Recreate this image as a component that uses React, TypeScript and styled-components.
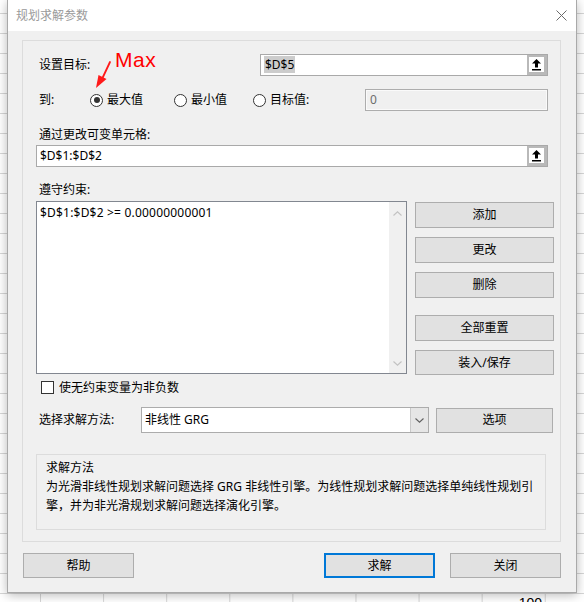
import { createGlobalStyle, styled } from 'styled-components'

const GlobalStyle = createGlobalStyle`
    html, body {
        margin: 0;
        padding: 0;
        background: #fff;
    }
    body {
        font-family: "Noto Sans", "Noto Sans CJK SC", sans-serif;
        font-size: 12px;
        color: #000;
    }
`

// ======== sheet behind the dialog ========
const Sheet = styled.div`
    position: relative;
    width: 584px;
    height: 602px;
    overflow: hidden;
    background-color: #fff;
    background-image:
        linear-gradient(to bottom, #d6d6d6 1px, transparent 1px),
        linear-gradient(to right, #d6d6d6 1px, transparent 1px);
    background-size: 100% 20px, 63.1px 100%;
    background-position: 0 13px, 40px 0;
`

const CellValue = styled.span`
    position: absolute;
    right: 42px;
    top: 595px;
    font-family: "Liberation Sans", sans-serif;
    font-size: 14px;
    line-height: 16px;
`

const Annotation = styled.div`
    position: absolute;
    left: 115px;
    top: 48px;
    z-index: 2;
    color: #ff0000;
    font-family: "Liberation Sans", sans-serif;
    font-size: 21px;
    line-height: 24px;
    letter-spacing: 0.5px;
`

const ArrowMark = styled.svg`
    position: absolute;
    left: 88px;
    top: 58px;
    z-index: 2;
`

// ======== dialog ========
const Dialog = styled.div`
    position: relative;
    z-index: 1;
    margin-left: 7px;
    width: 570px;
    height: 593px;
    box-sizing: border-box;
    border: 1px solid #a9a9a9;
    border-top: 0;
    background: #f0f0f0;
    box-shadow: 0 2px 10px rgba(0, 0, 0, 0.28);
    display: flex;
    flex-direction: column;
`

const TitleBar = styled.div`
    height: 31px;
    flex-shrink: 0;
    background: #fff;
    display: flex;
    align-items: center;
    justify-content: space-between;
    padding: 0 9px 0 8px;
`

const TitleText = styled.span`
    color: #9a9a9a;
    font-size: 12px;
    line-height: 16px;
`

const Body = styled.div`
    padding: 9px 0 0 14px;
`

const GroupBox = styled.div`
    width: 539px;
    height: 502px;
    box-sizing: border-box;
    border: 1px solid #dcdcdc;
    padding: 13px 0 0 13px;
    display: flex;
    flex-direction: column;
`

const Row = styled.div<{ $top?: number }>`
    display: flex;
    align-items: center;
    margin-top: ${p => p.$top ?? 0}px;
`

const Label = styled.span<{ $w?: number; $top?: number }>`
    margin-left: 3px;
    margin-top: ${p => p.$top ?? 0}px;
    width: ${p => (p.$w ? `${p.$w}px` : 'auto')};
    flex-shrink: 0;
    line-height: 16px;
    white-space: nowrap;
`

const Field = styled.div<{ $w: number; $auto?: boolean }>`
    width: ${p => p.$w}px;
    height: 22px;
    box-sizing: border-box;
    margin-left: ${p => (p.$auto ? 'auto' : '0')};
    margin-right: ${p => (p.$auto ? '12px' : '0')};
    border: 1px solid #a9a9a9;
    background: #fff;
    display: flex;
    align-items: center;
    flex-shrink: 0;
`

const FieldText = styled.span`
    padding-left: 3px;
    line-height: 18px;
    white-space: nowrap;
`

const Selected = styled.span`
    background: #cccccc;
    padding: 0 1px;
`

const PickerButton = styled.div`
    margin-left: auto;
    width: 20px;
    height: 20px;
    box-sizing: border-box;
    border: 2px solid #b9b9b9;
    border-right-width: 3px;
    border-bottom-width: 3px;
    background: #fff;
    display: flex;
    align-items: center;
    justify-content: center;
`

const DisabledField = styled.div`
    width: 183px;
    height: 22px;
    box-sizing: border-box;
    margin-left: auto;
    margin-right: 12px;
    border: 1px solid #adadad;
    box-shadow: inset 0 0 0 1px #fafafa;
    background: #f0f0f0;
    display: flex;
    align-items: center;
    padding-left: 4px;
    color: #6d6d6d;
    line-height: 18px;
`

const RadioItem = styled.label<{ $w?: number }>`
    display: flex;
    align-items: center;
    gap: 4px;
    width: ${p => (p.$w ? `${p.$w}px` : 'auto')};
    flex-shrink: 0;
    line-height: 16px;
`

const RadioCircle = styled.span<{ $checked?: boolean }>`
    width: 13px;
    height: 13px;
    box-sizing: border-box;
    border: 1px solid #333;
    border-radius: 50%;
    background: #fff;
    display: flex;
    align-items: center;
    justify-content: center;
    &::after {
        content: '';
        display: ${p => (p.$checked ? 'block' : 'none')};
        width: 6px;
        height: 6px;
        border-radius: 50%;
        background: #333;
    }
`

const ListArea = styled.div`
    display: flex;
    gap: 8px;
    margin-top: 3px;
`

const ListBox = styled.div`
    width: 371px;
    height: 173px;
    box-sizing: border-box;
    border: 1px solid #828790;
    background: #fff;
    display: flex;
`

const ListContent = styled.div`
    flex: 1;
    padding: 3px 0 0 3px;
    line-height: 16px;
    white-space: nowrap;
    letter-spacing: 0.2px;
`

const ScrollBar = styled.div`
    width: 17px;
    background: #f0f0f0;
    display: flex;
    flex-direction: column;
    align-items: center;
    justify-content: space-between;
    padding: 9px 0 7px;
    box-sizing: border-box;
`

const ButtonColumn = styled.div`
    width: 139px;
    padding-top: 1px;
    display: flex;
    flex-direction: column;
`

const Button = styled.button<{ $gap?: number; $w?: number; $h?: number; $primary?: boolean }>`
    margin: ${p => p.$gap ?? 0}px 0 0 0;
    width: ${p => (p.$w ? `${p.$w}px` : '100%')};
    height: ${p => p.$h ?? 26}px;
    box-sizing: border-box;
    flex-shrink: 0;
    padding: 0;
    background: #e1e1e1;
    border: ${p => (p.$primary ? '2px solid #0078d7' : '1px solid #adadad')};
    font-family: inherit;
    font-size: 12px;
    color: #000;
    line-height: 16px;
`

const CheckRow = styled.label`
    display: flex;
    align-items: center;
    gap: 5px;
    margin: 6px 0 0 5px;
    height: 13px;
    line-height: 16px;
`

const CheckBox = styled.span`
    width: 13px;
    height: 13px;
    box-sizing: border-box;
    border: 1px solid #333;
    background: #fff;
`

const Select = styled.div`
    width: 288px;
    height: 26px;
    box-sizing: border-box;
    border: 1px solid #acacac;
    background: #fff;
    display: flex;
    align-items: stretch;
    margin-right: 7px;
`

const SelectText = styled.span`
    flex: 1;
    padding-left: 3px;
    display: flex;
    align-items: center;
    line-height: 16px;
`

const SelectArrow = styled.span`
    width: 17px;
    background: #e6e6e6;
    border-left: 1px solid #c9c9c9;
    display: flex;
    align-items: center;
    justify-content: center;
`

const InfoBox = styled.div`
    width: 510px;
    height: 76px;
    box-sizing: border-box;
    margin-top: 21px;
    border: 1px solid #dcdcdc;
    padding: 3px 9px;
    line-height: 19px;
    white-space: nowrap;
`

const Footer = styled.div`
    display: flex;
    gap: 15px;
    margin-top: 11px;
    padding: 0 15px 0 15px;
    & > :nth-child(2) {
        margin-left: auto;
    }
`

// ======== drawings ========
function UpArrow() {
    return (
        <svg width="9" height="12" viewBox="0 0 9 12">
            <path d="M4.5 0 L9 4.5 H6 V8.5 H3 V4.5 H0 Z" fill="#000" />
            <rect x="0" y="10" width="9" height="1.5" fill="#000" />
        </svg>
    )
}

function Chevron({ up, color = '#c2c2c2' }: { up?: boolean; color?: string }) {
    return (
        <svg width="9" height="5" viewBox="0 0 9 5">
            <path d={up ? 'M0.5 4.5 L4.5 0.8 L8.5 4.5' : 'M0.5 0.5 L4.5 4.2 L8.5 0.5'} fill="none" stroke={color} strokeWidth="1.1" />
        </svg>
    )
}

function CloseIcon() {
    return (
        <svg width="11" height="11" viewBox="0 0 11 11">
            <path d="M0.5 0.5 L10.5 10.5 M10.5 0.5 L0.5 10.5" stroke="#6a6a6a" strokeWidth="1" />
        </svg>
    )
}


export default function App() {
    return (
        <Sheet>
            <GlobalStyle />
            <CellValue>100</CellValue>

            <Dialog>
                <TitleBar>
                    <TitleText>规划求解参数</TitleText>
                    <CloseIcon />
                </TitleBar>

                <Body>
                    <GroupBox>
                        {/* target */}
                        <Row>
                            <Label>设置目标:</Label>
                            <Field $w={288} $auto>
                                <FieldText><Selected>$D$5</Selected></FieldText>
                                <PickerButton><UpArrow /></PickerButton>
                            </Field>
                        </Row>

                        {/* to */}
                        <Row $top={13}>
                            <Label $w={51}>到:</Label>
                            <RadioItem $w={84}><RadioCircle $checked />最大值</RadioItem>
                            <RadioItem $w={79}><RadioCircle />最小值</RadioItem>
                            <RadioItem><RadioCircle />目标值:</RadioItem>
                            <DisabledField>0</DisabledField>
                        </Row>

                        {/* changing cells */}
                        <Label $top={16}>通过更改可变单元格:</Label>
                        <Row $top={2}>
                            <Field $w={512}>
                                <FieldText>$D$1:$D$2</FieldText>
                                <PickerButton><UpArrow /></PickerButton>
                            </Field>
                        </Row>

                        {/* constraints */}
                        <Label $top={15}>遵守约束:</Label>
                        <ListArea>
                            <ListBox>
                                <ListContent>$D$1:$D$2 &gt;= 0.00000000001</ListContent>
                                <ScrollBar>
                                    <Chevron up />
                                    <Chevron />
                                </ScrollBar>
                            </ListBox>
                            <ButtonColumn>
                                <Button>添加</Button>
                                <Button $gap={9}>更改</Button>
                                <Button $gap={9}>删除</Button>
                                <Button $gap={17}>全部重置</Button>
                                <Button $gap={9} $h={25}>装入/保存</Button>
                            </ButtonColumn>
                        </ListArea>

                        <CheckRow><CheckBox />使无约束变量为非负数</CheckRow>

                        {/* method */}
                        <Row $top={13}>
                            <Label $w={102}>选择求解方法:</Label>
                            <Select>
                                <SelectText>非线性 GRG</SelectText>
                                <SelectArrow><Chevron color="#606060" /></SelectArrow>
                            </Select>
                            <Button $w={117} $h={25}>选项</Button>
                        </Row>

                        <InfoBox>
                            求解方法<br />
                            为光滑非线性规划求解问题选择 GRG 非线性引擎。为线性规划求解问题选择单纯线性规划引<br />
                            擎，并为非光滑规划求解问题选择演化引擎。
                        </InfoBox>
                    </GroupBox>
                </Body>

                <Footer>
                    <Button $w={111} $h={25}>帮助</Button>
                    <Button $w={111} $h={25} $primary>求解</Button>
                    <Button $w={111} $h={25}>关闭</Button>
                </Footer>
            </Dialog>

            {/* red annotation */}
            <Annotation>Max</Annotation>
            <ArrowMark width="26" height="34" viewBox="0 0 26 34">
                <path d="M22 4 L14.5 20" stroke="#ff1a1a" strokeWidth="1.8" strokeLinecap="round" />
                <path d="M8 30 L10.5 17 L18.5 21 Z" fill="#ff1a1a" />
            </ArrowMark>
        </Sheet>
    )
}
